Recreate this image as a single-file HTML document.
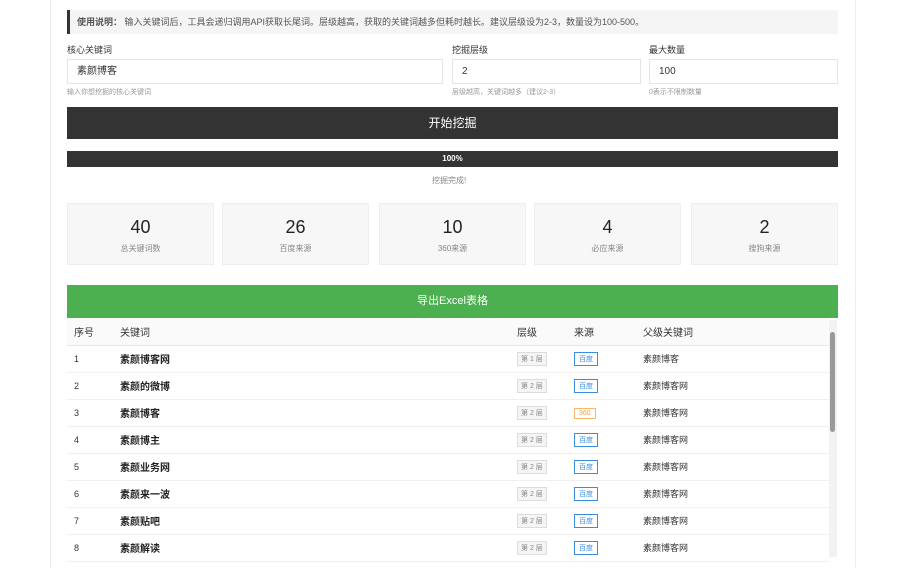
<!DOCTYPE html><html><head><meta charset="utf-8"><style>
*{box-sizing:border-box;margin:0;padding:0}
body{width:900px;height:557px;overflow:hidden;background:#fff;font-family:"Liberation Sans","Noto Sans CJK SC",sans-serif;color:#333;position:relative}
.wrap{position:absolute;left:50px;top:-2px;width:806px;height:570px;border-left:1px solid #eee;border-right:1px solid #eee}
.a{position:absolute}
.notice{left:67px;top:10px;width:771px;height:24px;background:#f5f5f5;border-left:3px solid #333;font-size:9px;line-height:24px;padding-left:7px;color:#555}
.lbl{font-size:9px;top:43px;color:#333}
.inp{top:59px;height:25px;border:1px solid #e5e5e5;font-size:10px;line-height:23px;padding-left:9px;color:#333}
.hint{top:87px;font-size:7px;color:#999}
.btn{left:67px;top:107px;width:771px;height:32px;background:#333;color:#fff;font-size:12px;text-align:center;line-height:32px}
.prog{left:67px;top:151px;width:771px;height:16px;background:#333;color:#fff;font-size:8px;text-align:center;line-height:16px;font-weight:bold}
.card{top:203px;width:147px;height:62px;background:#f7f7f7;border:1px solid #eee;text-align:center}
.card b{display:block;font-size:18px;font-weight:normal;margin-top:13px;color:#222}
.card span{font-size:8px;color:#888}
.green{left:67px;top:285px;width:771px;height:33px;background:#4caf50;color:#fff;font-size:11px;text-align:center;line-height:33px}
table{position:absolute;left:67px;top:318px;width:762px;border-collapse:collapse;font-size:9px}
th{height:27px;text-align:left;font-weight:normal;background:#fafafa;border-bottom:1px solid #e5e5e5;color:#333;font-size:10px}
td{height:27px;border-bottom:1px solid #f0f0f0}
td.k{font-weight:bold;color:#222;font-size:10px}
.lv{display:inline-block;border:1px solid #ddd;background:#f5f5f5;color:#888;font-size:7px;padding:1px 3px}
.src{display:inline-block;border:1px solid #3b8de0;color:#3b8de0;font-size:7px;padding:1px 4px}
.src.o{border-color:#f5b76a;color:#f0a040}
.sb{left:829px;top:320px;width:8px;height:237px;background:#f2f2f2}
.sb i{position:absolute;left:1px;top:12px;width:5px;height:100px;background:#999;border-radius:3px}
</style></head><body>
<div class="wrap"></div>
<div class="a notice"><b>使用说明：</b> 输入关键词后，工具会递归调用API获取长尾词。层级越高，获取的关键词越多但耗时越长。建议层级设为2-3，数量设为100-500。</div>
<div class="a lbl" style="left:67px">核心关键词</div>
<div class="a lbl" style="left:452px">挖掘层级</div>
<div class="a lbl" style="left:649px">最大数量</div>
<div class="a inp" style="left:67px;width:376px">素颜博客</div>
<div class="a inp" style="left:452px;width:189px">2</div>
<div class="a inp" style="left:649px;width:189px">100</div>
<div class="a hint" style="left:67px">输入你想挖掘的核心关键词</div>
<div class="a hint" style="left:452px">层级越高，关键词越多（建议2-3）</div>
<div class="a hint" style="left:649px">0表示不限制数量</div>
<div class="a btn">开始挖掘</div>
<div class="a prog">100%</div>
<div class="a" style="left:432px;top:175px;font-size:8px;color:#888">挖掘完成!</div>
<div class="a card" style="left:67px"><b>40</b><span>总关键词数</span></div>
<div class="a card" style="left:222px"><b>26</b><span>百度来源</span></div>
<div class="a card" style="left:379px"><b>10</b><span>360来源</span></div>
<div class="a card" style="left:534px"><b>4</b><span>必应来源</span></div>
<div class="a card" style="left:691px"><b>2</b><span>搜狗来源</span></div>
<div class="a green">导出Excel表格</div>
<table>
<tr><th style="width:53px;padding-left:7px">序号</th><th style="width:397px">关键词</th><th style="width:57px">层级</th><th style="width:69px">来源</th><th>父级关键词</th></tr>
<tr><td style="padding-left:7px">1</td><td class="k">素颜博客网</td><td><span class="lv">第 1 层</span></td><td><span class="src">百度</span></td><td>素颜博客</td></tr>
<tr><td style="padding-left:7px">2</td><td class="k">素颜的微博</td><td><span class="lv">第 2 层</span></td><td><span class="src">百度</span></td><td>素颜博客网</td></tr>
<tr><td style="padding-left:7px">3</td><td class="k">素颜博客</td><td><span class="lv">第 2 层</span></td><td><span class="src o">360</span></td><td>素颜博客网</td></tr>
<tr><td style="padding-left:7px">4</td><td class="k">素颜博主</td><td><span class="lv">第 2 层</span></td><td><span class="src">百度</span></td><td>素颜博客网</td></tr>
<tr><td style="padding-left:7px">5</td><td class="k">素颜业务网</td><td><span class="lv">第 2 层</span></td><td><span class="src">百度</span></td><td>素颜博客网</td></tr>
<tr><td style="padding-left:7px">6</td><td class="k">素颜来一波</td><td><span class="lv">第 2 层</span></td><td><span class="src">百度</span></td><td>素颜博客网</td></tr>
<tr><td style="padding-left:7px">7</td><td class="k">素颜贴吧</td><td><span class="lv">第 2 层</span></td><td><span class="src">百度</span></td><td>素颜博客网</td></tr>
<tr><td style="padding-left:7px">8</td><td class="k">素颜解读</td><td><span class="lv">第 2 层</span></td><td><span class="src">百度</span></td><td>素颜博客网</td></tr>
</table>
<div class="a sb"><i></i></div>
</body></html>
